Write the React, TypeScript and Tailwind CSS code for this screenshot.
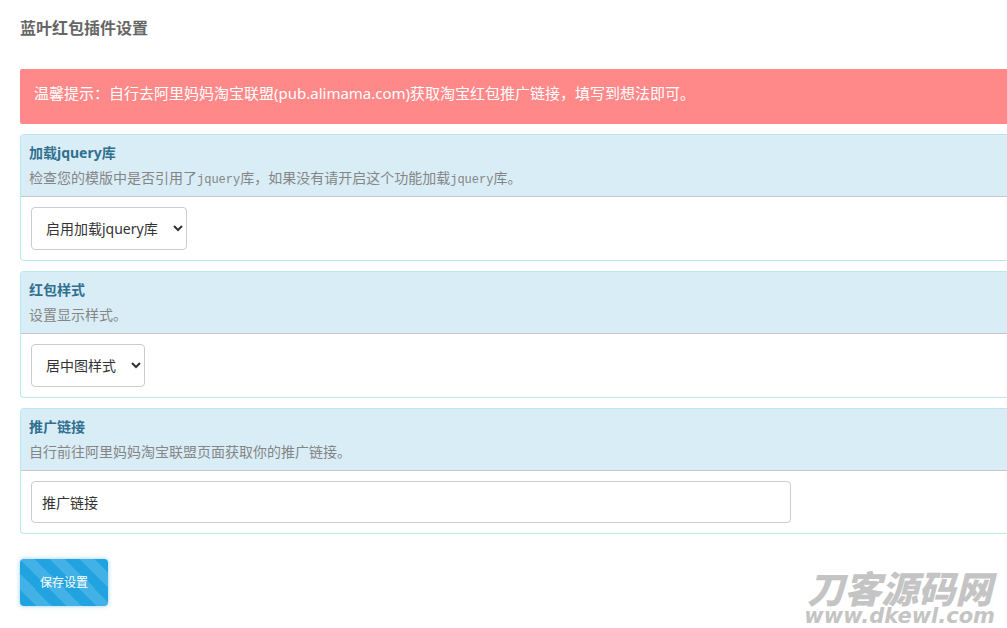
import type { ReactNode } from "react";

function Panel({
  id,
  title,
  description,
  children,
}: {
  id: string;
  title: string;
  description: ReactNode;
  children: ReactNode;
}) {
  return (
    <section className="rounded-l border border-r-0 border-[#bce8f1]">
      <header className="rounded-tl-[3px] border-b border-[#c8c8c8] bg-[#d9edf7] px-2 pt-2 pb-[5px]">
        <label htmlFor={id} className="block text-sm leading-5 font-bold text-[#31708f]">
          {title}
        </label>
        <p className="pt-1 text-sm leading-6 text-[#858585] font-['Liberation_Serif','Noto_Sans_CJK_SC',serif]">
          {description}
        </p>
      </header>
      <div className="flex p-2.5">{children}</div>
    </section>
  );
}

function Code({ children }: { children: ReactNode }) {
  return <span className="text-xs font-['Liberation_Mono',monospace]">{children}</span>;
}

export default function App() {
  return (
    <main className="relative min-h-screen overflow-hidden bg-white pt-4 pb-5 pl-5 text-sm text-[#333] font-['Noto_Sans','Noto_Sans_CJK_SC',sans-serif]">
      <h1 className="text-base leading-6 font-bold text-[#666]">蓝叶红包插件设置</h1>

      <form className="mt-[29px] flex flex-col gap-2.5" onSubmit={(e) => e.preventDefault()}>
        <div
          role="alert"
          className="rounded-l-xs bg-[#ff8888] px-3.5 pt-3 pb-[18px] text-[15px] leading-[25px] text-white"
        >
          温馨提示：自行去阿里妈妈淘宝联盟(pub.alimama.com)获取淘宝红包推广链接，填写到想法即可。
        </div>

        <Panel
          id="jquery"
          title="加载jquery库"
          description={
            <>
              检查您的模版中是否引用了<Code>jquery</Code>库，如果没有请开启这个功能加载<Code>jquery</Code>库。
            </>
          }
        >
          <select id="jquery" className="h-[43px] rounded border border-[#ccc] bg-white pr-3 pl-2.5">
            <option>启用加载jquery库</option>
            <option>关闭加载jquery库</option>
          </select>
        </Panel>

        <Panel id="style" title="红包样式" description="设置显示样式。">
          <select id="style" className="h-[43px] rounded border border-[#ccc] bg-white pr-3 pl-2.5">
            <option>居中图样式</option>
            <option>悬浮图样式</option>
          </select>
        </Panel>

        <Panel id="link" title="推广链接" description="自行前往阿里妈妈淘宝联盟页面获取你的推广链接。">
          <input
            id="link"
            type="text"
            defaultValue="推广链接"
            className="h-[42px] w-full max-w-[760px] rounded border border-[#ccc] bg-white px-2.5"
          />
        </Panel>

        <button
          type="submit"
          className="mt-[15px] h-[47px] self-start rounded bg-[#21a3e0] bg-[linear-gradient(45deg,#ffffff26_25%,transparent_25%,transparent_50%,#ffffff26_50%,#ffffff26_75%,transparent_75%)] bg-[length:30px_30px] px-5 text-xs text-white shadow-[0_0_4px_#21a3e080]"
        >
          保存设置
        </button>
      </form>

      <div className="absolute right-3 bottom-0.5 flex flex-col items-center font-black text-[#c4c4c4] italic">
        <span className="text-[37px] leading-[38px] font-['Noto_Sans_CJK_SC',sans-serif]">刀客源码网</span>
        <span className="text-[21px] leading-5 font-['DejaVu_Sans',sans-serif]">www.dkewl.com</span>
      </div>
    </main>
  );
}
